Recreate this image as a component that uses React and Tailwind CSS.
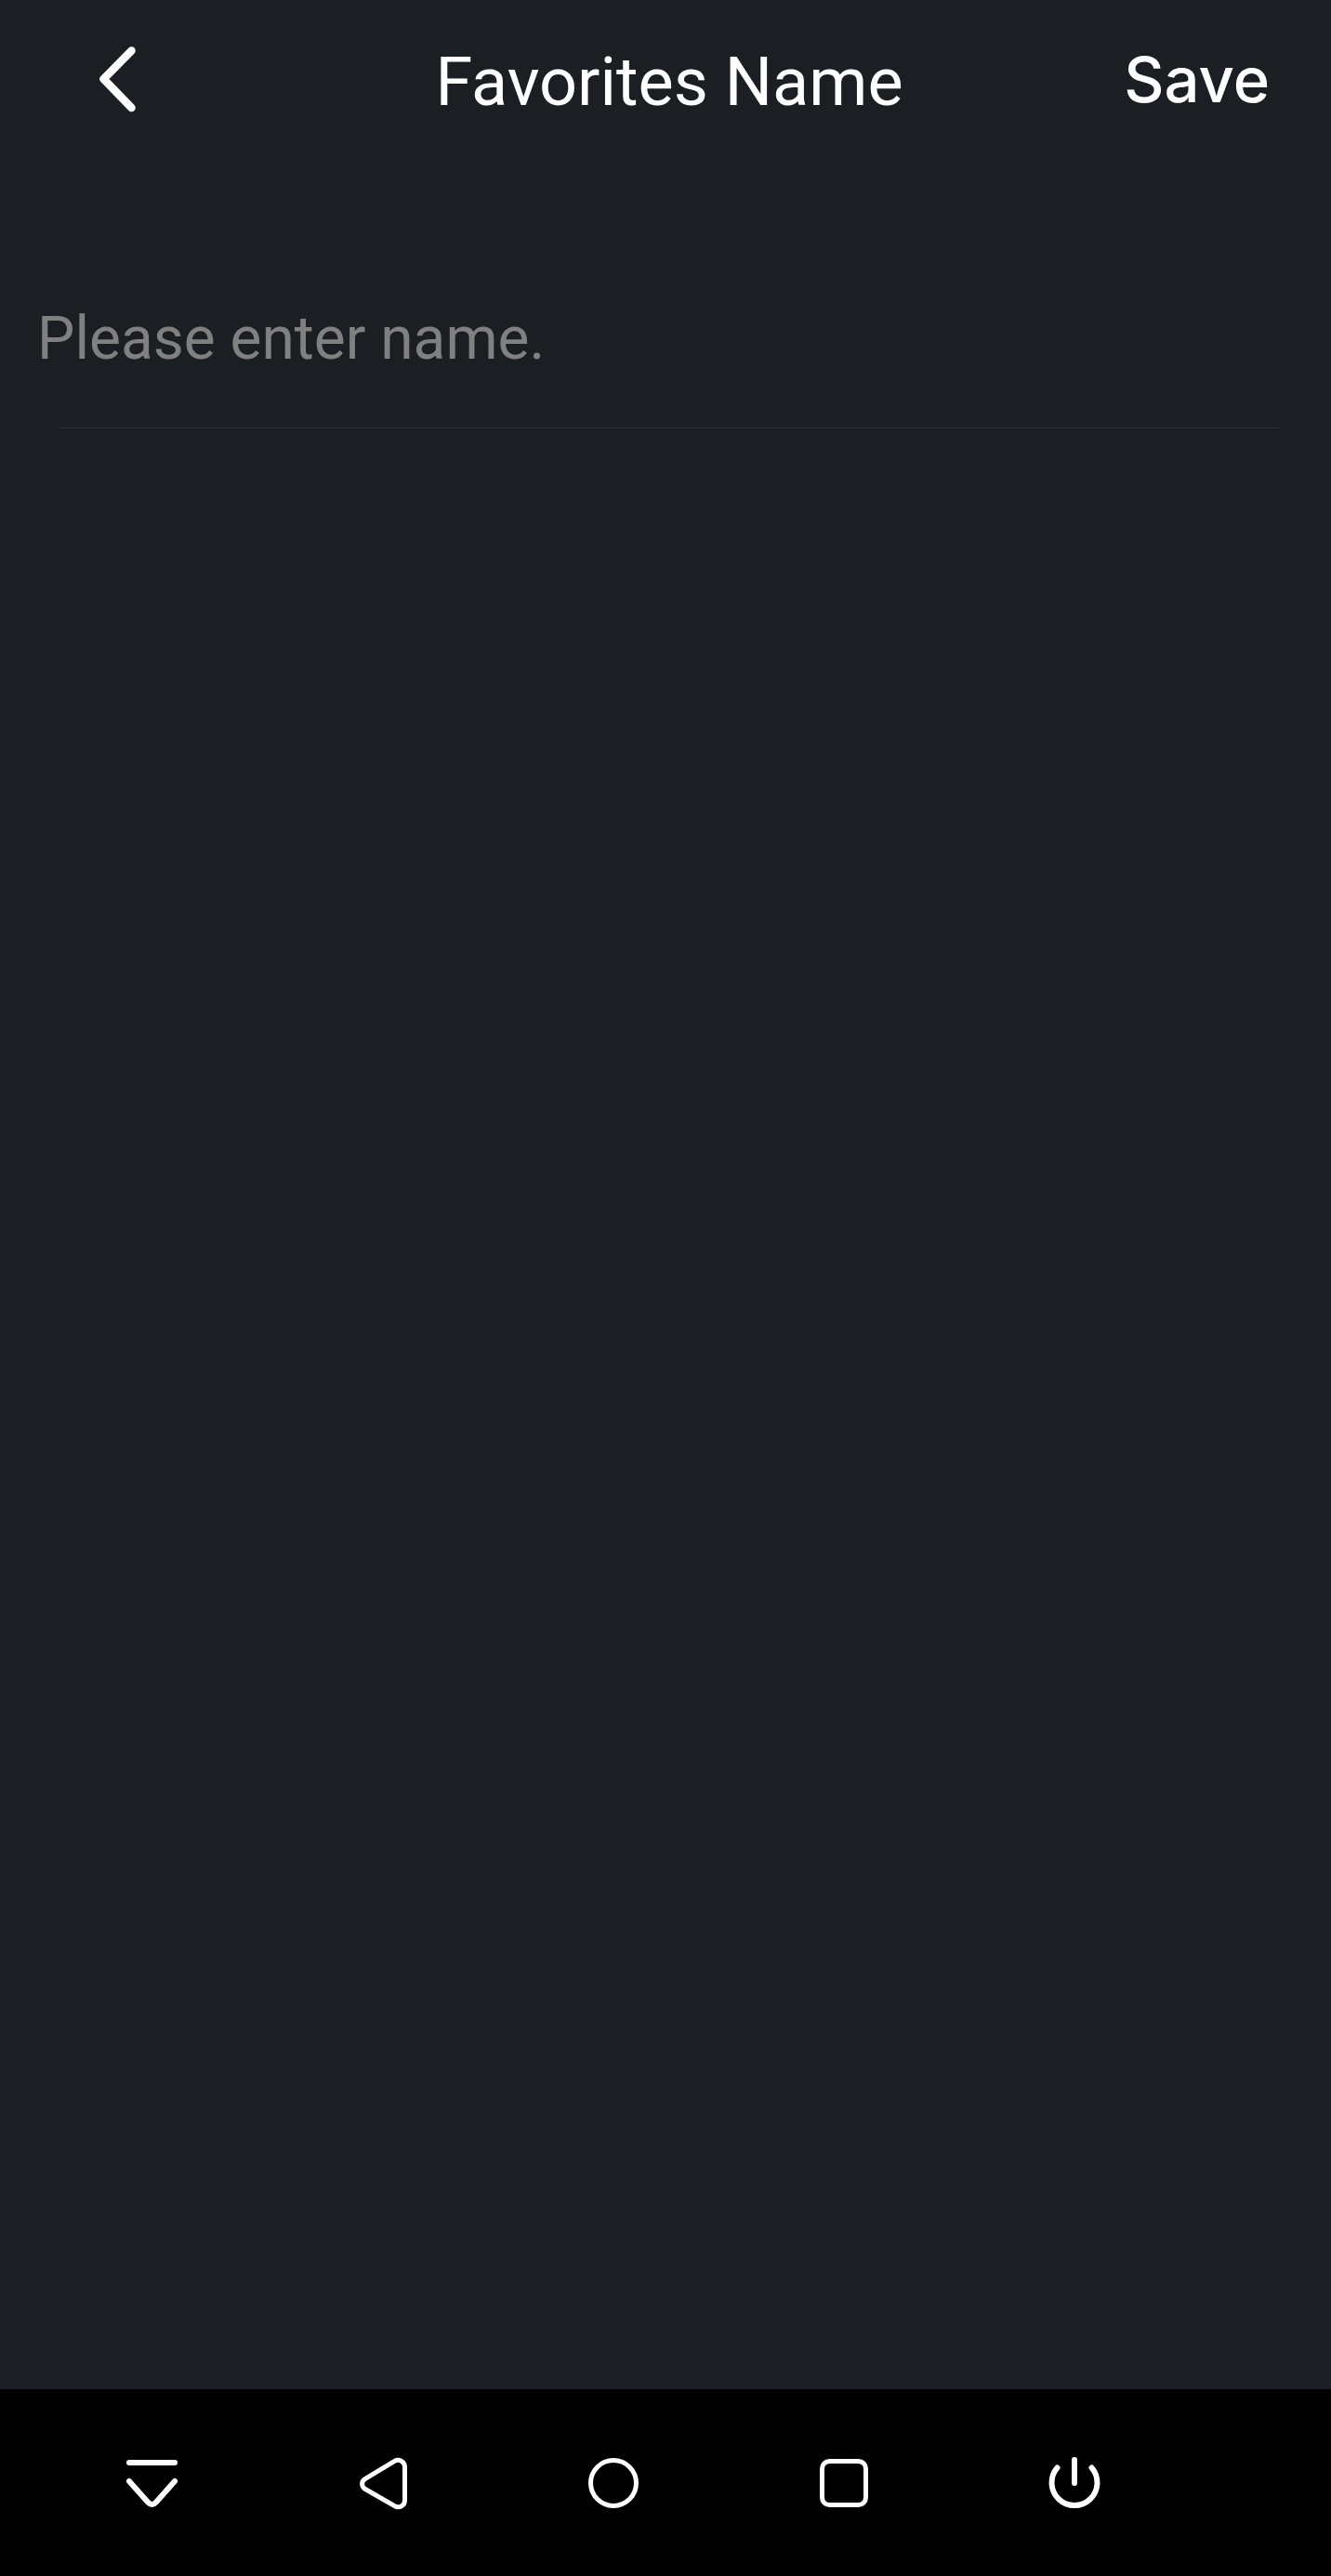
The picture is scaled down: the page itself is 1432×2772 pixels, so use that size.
import React, { useState } from 'react';

const NavButton = ({ label, children }) => (
    <button type="button" aria-label={label} className="flex flex-1 justify-center pt-[69px] pb-[68px]">
        <svg
            viewBox="0 0 64 64"
            className="size-16"
            fill="none"
            stroke="currentColor"
            strokeWidth="5"
            strokeLinecap="round"
            strokeLinejoin="round"
        >
            {children}
        </svg>
    </button>
);

const App = () => {
    const [name, setName] = useState('');

    const onSubmit = (e) => {
        e.preventDefault();
    };

    return (
        <div className="flex min-h-screen flex-col bg-[#1b1e22] font-['Roboto',sans-serif] text-white">
            <form onSubmit={onSubmit} className="flex-1">
                <header className="flex h-44 items-center">
                    <button type="button" aria-label="Back" className="w-59 pl-24">
                        <svg
                            viewBox="0 0 64 80"
                            className="h-20 w-16"
                            fill="none"
                            stroke="currentColor"
                            strokeWidth="8.5"
                            strokeLinecap="round"
                            strokeLinejoin="round"
                        >
                            <path d="M45.5 6.5L15.5 37L45.5 68" />
                        </svg>
                    </button>
                    <h1 className="flex-1 pt-0.5 text-center text-[72px] leading-[84px]">Favorites Name</h1>
                    <button
                        type="submit"
                        className="w-57 pr-[66px] pb-1 text-right font-['Inter',sans-serif] text-[67px] leading-[80px] font-medium"
                    >
                        Save
                    </button>
                </header>

                <input
                    type="text"
                    aria-label="Favorites name"
                    placeholder="Please enter name."
                    value={name}
                    onChange={(e) => setName(e.target.value)}
                    className="mt-28 block h-[152px] w-full px-10 text-[64px] outline-none placeholder:text-[#808080]"
                />
                <hr className="mt-5 mr-14 ml-16 border-[#2b2d35]" />
            </form>

            {/* Barra de navegación del sistema */}
            <nav className="flex bg-black pr-[153px] pl-[39px]">
                <NavButton label="Hide navigation bar">
                    <path d="M8 10H57M8 30L28 52.5Q32.5 57.5 37 52.5L57 30" strokeWidth="6" />
                </NavButton>
                <NavButton label="Back">
                    <path d="M45.5 8.4C50.5 5.6 56.5 9 56.5 14.5V50.5C56.5 56.5 50.5 59.5 45.5 56.6L14 38.5C9.5 36 9.5 30 14 27.3Z" />
                </NavButton>
                <NavButton label="Home">
                    <circle cx="33" cy="32" r="24.5" />
                </NavButton>
                <NavButton label="Recent apps">
                    <rect x="9.5" y="8.5" width="47" height="47" rx="8" />
                </NavButton>
                <NavButton label="Power">
                    <path d="M33 7V32M14.5 15.5A24.5 24.5 0 1 0 51.5 15.5" strokeWidth="6" />
                </NavButton>
            </nav>
        </div>
    );
};

export default App;
